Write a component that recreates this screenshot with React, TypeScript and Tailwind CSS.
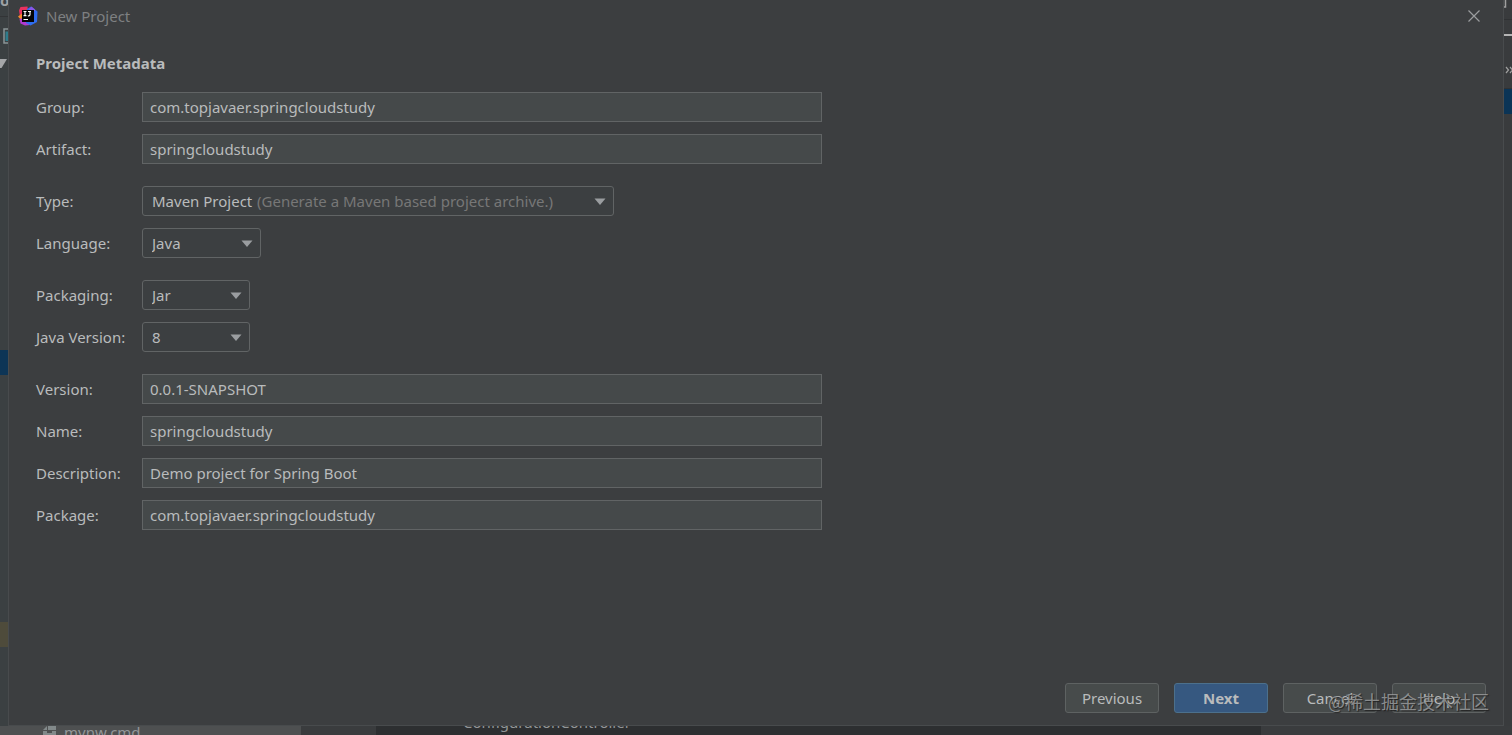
import { useId } from "react";
import type { ReactNode } from "react";

interface TextRowProps {
  label: string;
  value: string;
}

interface SelectRowProps {
  label: string;
  value: string;
  hint?: string;
  width: string;
}

function Row({ id, label, children }: { id: string; label: string; children: ReactNode }) {
  return (
    <div className="flex items-center">
      <label htmlFor={id} className="w-[106px] shrink-0">
        {label}
      </label>
      {children}
    </div>
  );
}

function TextRow({ label, value }: TextRowProps) {
  const id = useId();
  return (
    <Row id={id} label={label}>
      <input
        id={id}
        type="text"
        defaultValue={value}
        className="h-[30px] w-full max-w-[680px] border border-[#616465] bg-[#45494a] px-[7px] outline-none focus:border-[#466d94]"
      />
    </Row>
  );
}

function SelectRow({ label, value, hint, width }: SelectRowProps) {
  const id = useId();
  return (
    <Row id={id} label={label}>
      <div className={`relative ${width}`}>
        <select
          id={id}
          defaultValue={value}
          className="block h-[30px] w-full appearance-none rounded-[3px] border border-[#616465] bg-[#3c3f41] px-[9px] outline-none"
        >
          <option>{value}</option>
        </select>
        {hint && (
          <span className="pointer-events-none absolute inset-y-0 left-[115px] flex items-center whitespace-nowrap text-[#777777]">
            {hint}
          </span>
        )}
        <svg viewBox="0 0 12 7" className="pointer-events-none absolute top-3 right-2 h-[7px] w-3" fill="#9a9da0">
          <path d="M0.500 0.500h11L6 7z" />
        </svg>
      </div>
    </Row>
  );
}

function Logo() {
  return (
    <svg viewBox="0 0 20 20" className="size-5">
      <path d="M1 4.500 2.500 1 9.500 0.500l1 8-7 6L2 11z" fill="#e8315f" />
      <path d="M0 10.500 4 7.500v7.500z" fill="#f78a2b" />
      <path d="M1.500 13l4.500-1 6 7-5 0.500-4.500-2z" fill="#b03ad0" />
      <path d="M9 3 13 0.500l6.500 5L19 16l-6.500 3.500L8 17z" fill="#2f6df0" />
      <path d="M11 3.200 13.500 0.500l3.500 3v1.500h-6z" fill="#8a55e8" />
      <rect x="4" y="4" width="12" height="12" fill="#050505" />
      <path d="M5.500 5.500h3M7 5.500v4.200M5.500 9.700h3M10 5.500h3M12 5.500v3q0 1.300-1.300 1.300H9.800" fill="none" stroke="#fff" strokeWidth="1.200" />
      <path d="M5.500 13.500h4.500" stroke="#fff" strokeWidth="1" />
    </svg>
  );
}

function LeftEdge() {
  return (
    <div className="flex w-2 shrink-0 flex-col overflow-hidden bg-[#3b4042]">
      <span className="-mt-2 h-5 text-[15px] leading-4 font-bold text-[#9da0a2]">o</span>
      <div className="mt-1 h-px bg-[#323436]" />
      <svg viewBox="0 0 8 16" className="mt-[11px] ml-[3px] h-4 w-2 shrink-0">
        <path d="M8 1H1v14h7" fill="none" stroke="#8b9497" strokeWidth="1.500" />
        <path d="M2.500 3.500h5.500v9.500H2.500z" fill="#2e7c8c" />
      </svg>
      <svg viewBox="0 0 8 9" className="mt-[15px] h-[9px] w-2 shrink-0">
        <path d="M0 0h7L1.500 9H0z" fill="#a4a6a8" />
      </svg>
      <div className="mt-[282px] h-[25px] shrink-0 bg-[#0d3556]" />
      <div className="mt-[247px] h-[25px] shrink-0 bg-[#4e4b3b]" />
    </div>
  );
}

function RightEdge() {
  return (
    <div className="flex w-2 shrink-0 flex-col overflow-hidden bg-[#393b3d]">
      <svg viewBox="0 0 8 38" className="h-[38px] w-2 shrink-0">
        <path d="M1.500 0v7H0" fill="none" stroke="#a0a0a0" strokeWidth="1.500" />
        <path d="M0 19.500h8" stroke="#303234" />
        <path d="M0 35h8" stroke="#b4b4b4" strokeWidth="2" />
      </svg>
      <svg viewBox="0 0 8 8" className="mt-7 h-2 w-2 shrink-0" fill="none" stroke="#a0a0a0" strokeWidth="1.200">
        <path d="M2 1l2.500 3L2 7M6 1l2.500 3L6 7" />
      </svg>
      <div className="mt-[14px] h-px shrink-0 bg-[#303234]" />
      <div className="h-[25px] shrink-0 bg-[#0b3456]" />
    </div>
  );
}

function BottomEdge() {
  return (
    <div className="flex h-[9px] shrink-0 overflow-hidden bg-[#3a3c3e] text-[15px] leading-3 text-[#939698]">
      <div className="flex w-[301px] shrink-0 gap-2 bg-[#4e5051] pl-[43px]">
        <svg viewBox="0 0 13 10" className="h-[10px] w-[13px]" fill="#82898a">
          <path d="M5 0h8v4H5zM0 4l4-4v4zM0 5h4v2h5V5h4v4H0z" />
        </svg>
        <span>mvnw.cmd</span>
      </div>
      <div className="w-[75px] shrink-0" />
      <div className="flex-1 bg-[#2d2f31] pl-[87px]">
        <span className="block -mt-[10px]">ConfigurationController</span>
      </div>
      <div className="w-[251px] shrink-0" />
    </div>
  );
}

const button = "h-[30px] w-[94px] rounded-[3px] border";
const plainButton = `${button} border-[#5e6262] bg-[#474b4b]`;

export default function App() {
  return (
    <div className="flex h-screen flex-col overflow-hidden bg-[#3c3f41] font-['Noto_Sans','Noto_Sans_CJK_SC',sans-serif] text-[15px] leading-6 text-[#b9bbbc]">
      <div className="flex min-h-0 flex-1">
        <LeftEdge />
        <main className="relative flex min-w-0 flex-1 flex-col border-x border-b border-[#484b4d] bg-[#3c3e40]">
          <header className="flex h-8 items-center justify-between pr-[23px] pl-[9px] text-[#7e8082]">
            <div className="flex items-center gap-2">
              <Logo />
              <span>New Project</span>
            </div>
            <button type="button" aria-label="Close">
              <svg viewBox="0 0 12 12" className="size-3" stroke="#9b9d9f" strokeWidth="1.200">
                <path d="M0.500 0.500l11 11M11.500 0.500l-11 11" />
              </svg>
            </button>
          </header>

          <form className="flex flex-1 flex-col px-[27px] pt-[19px]">
            <h1 className="font-bold">Project Metadata</h1>
            <div className="mt-[17px] flex flex-col gap-[22px]">
              <div className="flex flex-col gap-3">
                <TextRow label="Group:" value="com.topjavaer.springcloudstudy" />
                <TextRow label="Artifact:" value="springcloudstudy" />
              </div>
              <div className="flex flex-col gap-3">
                <SelectRow label="Type:" value="Maven Project" hint="(Generate a Maven based project archive.)" width="w-[472px]" />
                <SelectRow label="Language:" value="Java" width="w-[119px]" />
              </div>
              <div className="flex flex-col gap-3">
                <SelectRow label="Packaging:" value="Jar" width="w-[108px]" />
                <SelectRow label="Java Version:" value="8" width="w-[108px]" />
              </div>
              <div className="flex flex-col gap-3">
                <TextRow label="Version:" value="0.0.1-SNAPSHOT" />
                <TextRow label="Name:" value="springcloudstudy" />
                <TextRow label="Description:" value="Demo project for Spring Boot" />
                <TextRow label="Package:" value="com.topjavaer.springcloudstudy" />
              </div>
            </div>
          </form>

          <footer className="flex justify-end gap-[15px] pr-[17px] pb-3">
            <button type="button" className={plainButton}>Previous</button>
            <button type="button" className={`${button} border-[#4c708c] bg-[#365880] font-bold`}>Next</button>
            <button type="button" className={plainButton}>Cancel</button>
            <button type="button" className={plainButton}>Help</button>
          </footer>

          <span className="pointer-events-none absolute right-[14px] bottom-3 font-['Noto_Sans_CJK_SC',sans-serif] text-[18px] whitespace-nowrap text-[#a0a2a3]/80 [text-shadow:1px_1px_1px_#222]">
            @稀土掘金技术社区
          </span>
        </main>
        <RightEdge />
      </div>
      <BottomEdge />
    </div>
  );
}
